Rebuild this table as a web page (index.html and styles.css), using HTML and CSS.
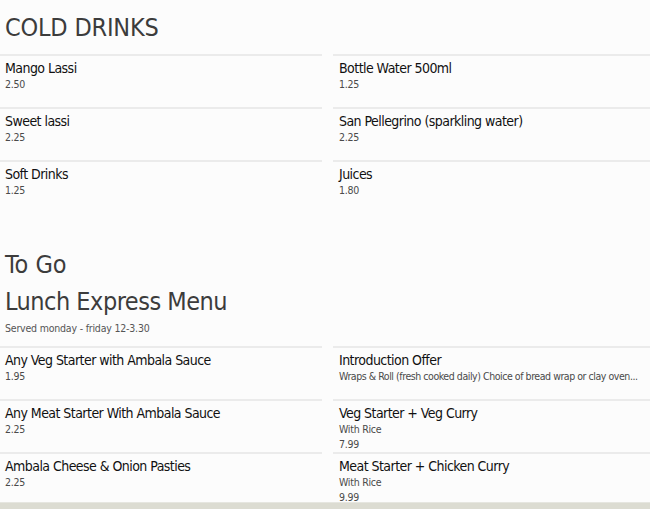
FILE: index.html
```html
<!DOCTYPE html>
<html>
<head>
<meta charset="utf-8">
<link rel="stylesheet" href="styles.css">
</head>
<body>
<div class="page">
  <section class="section">
    <h2 class="title title-first">COLD DRINKS</h2>
    <div class="grid">
      <div class="item"><div class="name">Mango Lassi</div><div class="sub">2.50</div></div>
      <div class="item right"><div class="name">Bottle Water 500ml</div><div class="sub">1.25</div></div>
      <div class="item"><div class="name">Sweet lassi</div><div class="sub">2.25</div></div>
      <div class="item right"><div class="name">San Pellegrino (sparkling water)</div><div class="sub">2.25</div></div>
      <div class="item"><div class="name">Soft Drinks</div><div class="sub">1.25</div></div>
      <div class="item right"><div class="name">Juices</div><div class="sub">1.80</div></div>
    </div>
  </section>
  <section class="section">
    <h2 class="title title-togo">To Go</h2>
    <h2 class="title title-lunch">Lunch Express Menu</h2>
    <div class="note">Served monday - friday 12-3.30</div>
    <div class="grid">
      <div class="item"><div class="name">Any Veg Starter with Ambala Sauce</div><div class="sub">1.95</div></div>
      <div class="item right"><div class="name">Introduction Offer</div><div class="sub tight">Wraps &amp; Roll (fresh cooked daily) Choice of bread wrap or clay oven...</div></div>
      <div class="item"><div class="name">Any Meat Starter With Ambala Sauce</div><div class="sub">2.25</div></div>
      <div class="item right"><div class="name">Veg Starter + Veg Curry</div><div class="sub">With Rice</div><div class="sub">7.99</div></div>
      <div class="item"><div class="name">Ambala Cheese &amp; Onion Pasties</div><div class="sub">2.25</div></div>
      <div class="item right"><div class="name">Meat Starter + Chicken Curry</div><div class="sub">With Rice</div><div class="sub">9.99</div></div>
    </div>
  </section>
</div>
<div class="footer-band"></div>
</body>
</html>
```

FILE: styles.css
```css
html, body {
  margin: 0;
  padding: 0;
  background: #fcfcfc;
  overflow: hidden;
  height: 509px;
}
body {
  font-family: "DejaVu Sans Condensed", "DejaVu Sans", sans-serif;
  color: #111;
}
.page {
  width: 650px;
}
.title {
  margin: 0;
  padding-left: 5px;
  font-weight: normal;
  font-size: 25px;
  color: #3c3c3c;
  line-height: 30px;
}
.title-first {
  padding-top: 13px;
  padding-bottom: 11px;
  letter-spacing: -0.2px;
}
.title-togo {
  margin-top: 37px;
}
.title-lunch {
  margin-top: 7px;
  letter-spacing: -0.5px;
}
.note {
  padding-left: 5px;
  font-size: 10.5px;
  letter-spacing: -0.2px;
  color: #555;
  margin-top: 5px;
  margin-bottom: 12px;
}
.grid {
  display: grid;
  grid-template-columns: 322px 317px;
  column-gap: 11px;
}
.item {
  border-top: 2px solid #ebebeb;
  height: 51px;
  box-sizing: content-box;
  padding-left: 5px;
  overflow: hidden;
  min-width: 0;
}
.item.right {
  padding-left: 6px;
}
.name {
  font-size: 14px;
  line-height: 17px;
  margin-top: 4px;
  letter-spacing: -0.55px;
  color: #111;
  white-space: nowrap;
}
.sub {
  font-size: 10.5px;
  line-height: 15px;
  letter-spacing: -0.25px;
  color: #4a4a4a;
  white-space: nowrap;
}
.sub.tight {
  letter-spacing: -0.45px;
}
.footer-band {
  position: fixed;
  left: 0;
  right: 0;
  bottom: 0;
  height: 6px;
  background: #dcdcd2;
  border-top: 1px solid #e6e6e0;
}
```
